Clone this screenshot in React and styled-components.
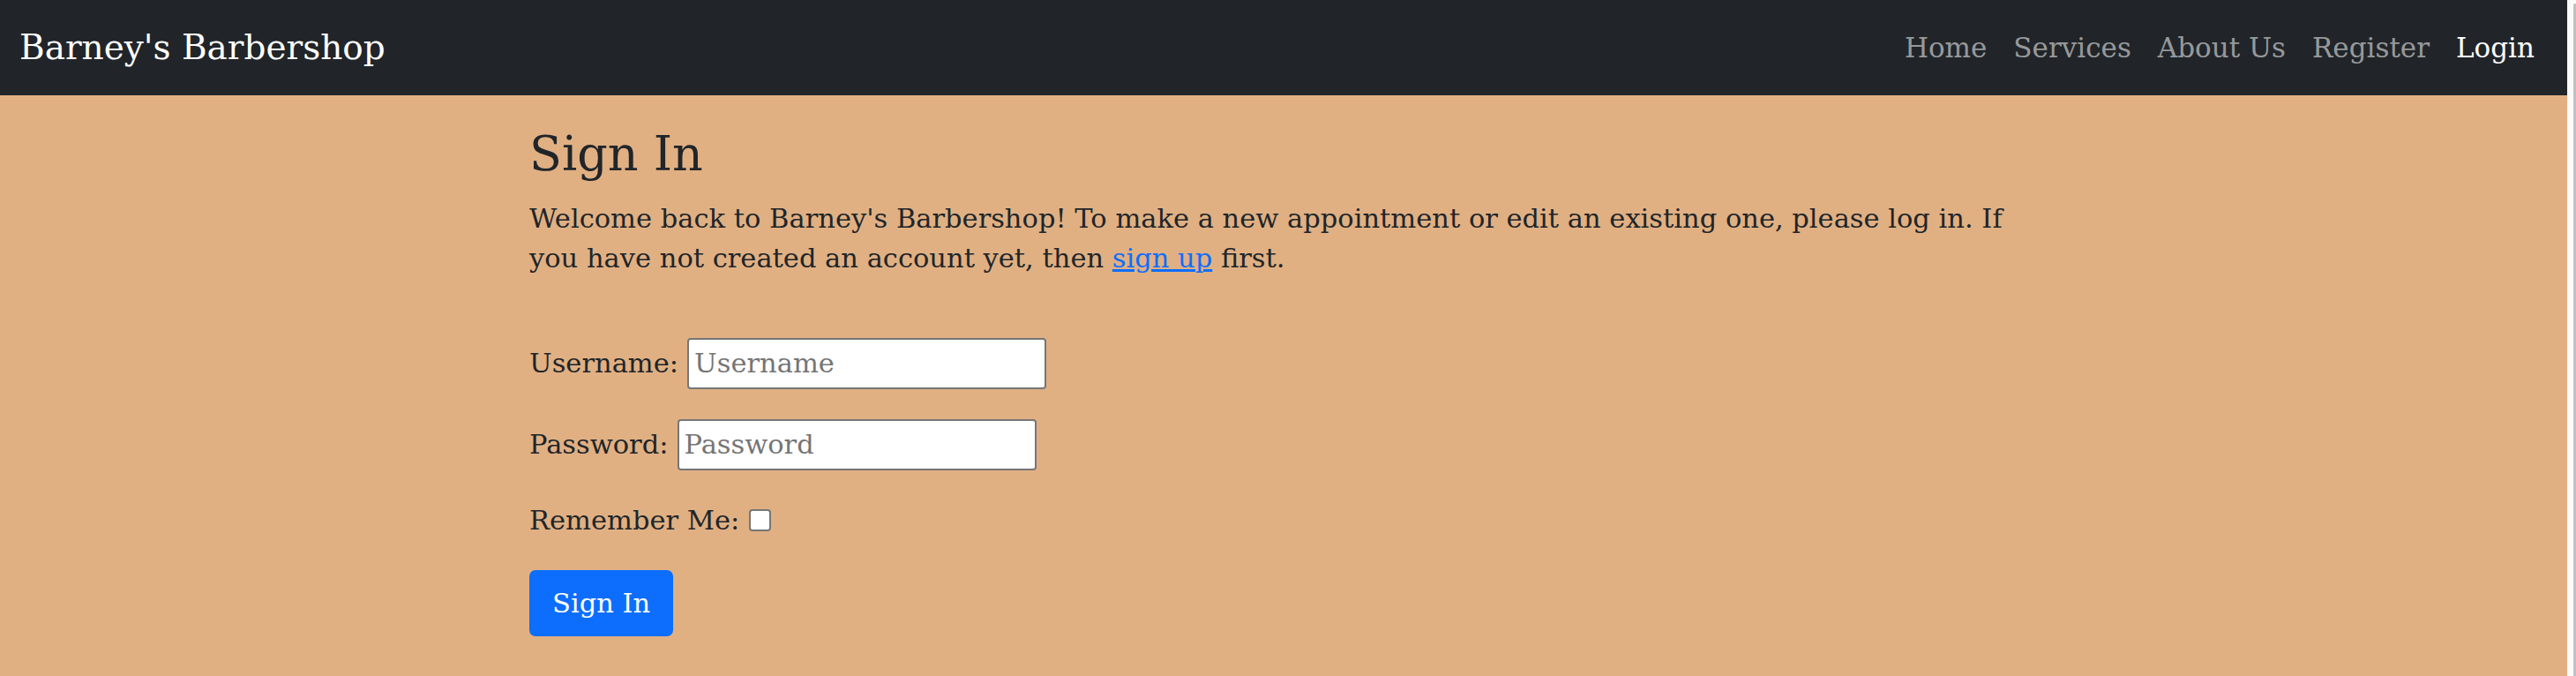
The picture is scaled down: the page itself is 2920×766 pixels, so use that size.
import React from "react";
import styled, { createGlobalStyle } from "styled-components";

const GlobalStyle = createGlobalStyle`
  html, body {
    margin: 0;
    padding: 0;
  }
  body {
    font-family: "DejaVu Serif", "Liberation Serif", serif;
    font-size: 30.5px;
    line-height: 45px;
    color: #212529;
    background: #e0b083;
    overflow: hidden;
  }
  * {
    box-sizing: border-box;
  }
`

const Shell = styled.div`
  display: flex;
  height: 766px;
  overflow: hidden;
`
const Page = styled.div`
  flex: 1;
  display: flex;
  flex-direction: column;
  background: #e0b083;
`
// the sliver of browser scrollbar on the right edge
const ScrollTrack = styled.div`
  width: 10px;
  background: #fafafa;
  display: flex;
  justify-content: flex-end;
  padding-top: 4px;
`
const ScrollThumb = styled.div`
  width: 3px;
  background: #c1c1c1;
  border-radius: 2px 0 0 0;
`
const NavBar = styled.nav`
  height: 108px;
  flex-shrink: 0;
  background: #212529;
  display: flex;
  align-items: center;
  justify-content: space-between;
  padding: 0 22px;
`
const Brand = styled.a`
  color: #fff;
  font-size: 39px;
  line-height: 1.5;
  text-decoration: none;
`
const NavList = styled.div`
  display: flex;
  align-items: center;
`
const NavLink = styled.a`
  color: ${props => (props.active ? "#fff" : "rgba(255, 255, 255, 0.55)")};
  font-size: 31px;
  line-height: 1.5;
  padding: 0 15px;
  text-decoration: none;
`
const Container = styled.main`
  width: 1710px;
  margin: 0 auto;
  padding-top: 35px;
`
const Title = styled.h2`
  font-size: 54px;
  font-weight: 400;
  line-height: 1.2;
  margin: 0 0 17px;
`
const Intro = styled.p`
  margin: 0;
  max-width: 1700px;
`
const TextLink = styled.a`
  color: #0d6efd;
  text-decoration: underline;
`
const Form = styled.form`
  display: flex;
  flex-direction: column;
  align-items: flex-start;
  gap: 34px;
  margin-top: 68px;
`
const Row = styled.div`
  display: flex;
  align-items: center;
  gap: ${props => props.gap || 10}px;
`
const Label = styled.label`
  white-space: nowrap;
`
const TextInput = styled.input`
  width: 407px;
  height: 58px;
  font-family: inherit;
  font-size: 30.5px;
  padding: 2px 6px;
  border: 2px solid #767676;
  border-radius: 4px;
  background: #fff;
  color: #212529;
  &::placeholder {
    color: #757575;
  }
`
const CheckBox = styled.input`
  appearance: none;
  width: 25px;
  height: 25px;
  margin: 0;
  border: 2px solid #767676;
  border-radius: 4px;
  background: #fff;
`
const SubmitButton = styled.button`
  font-family: inherit;
  font-size: 30.5px;
  line-height: 45px;
  color: #fff;
  background: #0d6efd;
  border: 2px solid #0d6efd;
  border-radius: 7px;
  padding: 13px 24px;
  cursor: pointer;
`

const App = () => {
  return (
    <Shell>
      <GlobalStyle />
      <Page>
        <NavBar>
          <Brand href="#">Barney's Barbershop</Brand>
          <NavList>
            <NavLink href="#">Home</NavLink>
            <NavLink href="#">Services</NavLink>
            <NavLink href="#">About Us</NavLink>
            <NavLink href="#">Register</NavLink>
            <NavLink href="#" active>Login</NavLink>
          </NavList>
        </NavBar>

        <Container>
          <Title>Sign In</Title>
          <Intro>
            Welcome back to Barney's Barbershop! To make a new appointment or edit an existing one, please log in. If
            you have not created an account yet, then <TextLink href="#">sign up</TextLink> first.
          </Intro>

          <Form onSubmit={e => e.preventDefault()}>
            <Row>
              <Label htmlFor="username">Username:</Label>
              <TextInput id="username" type="text" placeholder="Username" />
            </Row>
            <Row>
              <Label htmlFor="password">Password:</Label>
              <TextInput id="password" type="password" placeholder="Password" />
            </Row>
            <Row gap={11}>
              <Label htmlFor="remember">Remember Me:</Label>
              <CheckBox id="remember" type="checkbox" />
            </Row>
            <SubmitButton type="submit">Sign In</SubmitButton>
          </Form>
        </Container>
      </Page>
      <ScrollTrack>
        <ScrollThumb />
      </ScrollTrack>
    </Shell>
  );
};

export default App;
